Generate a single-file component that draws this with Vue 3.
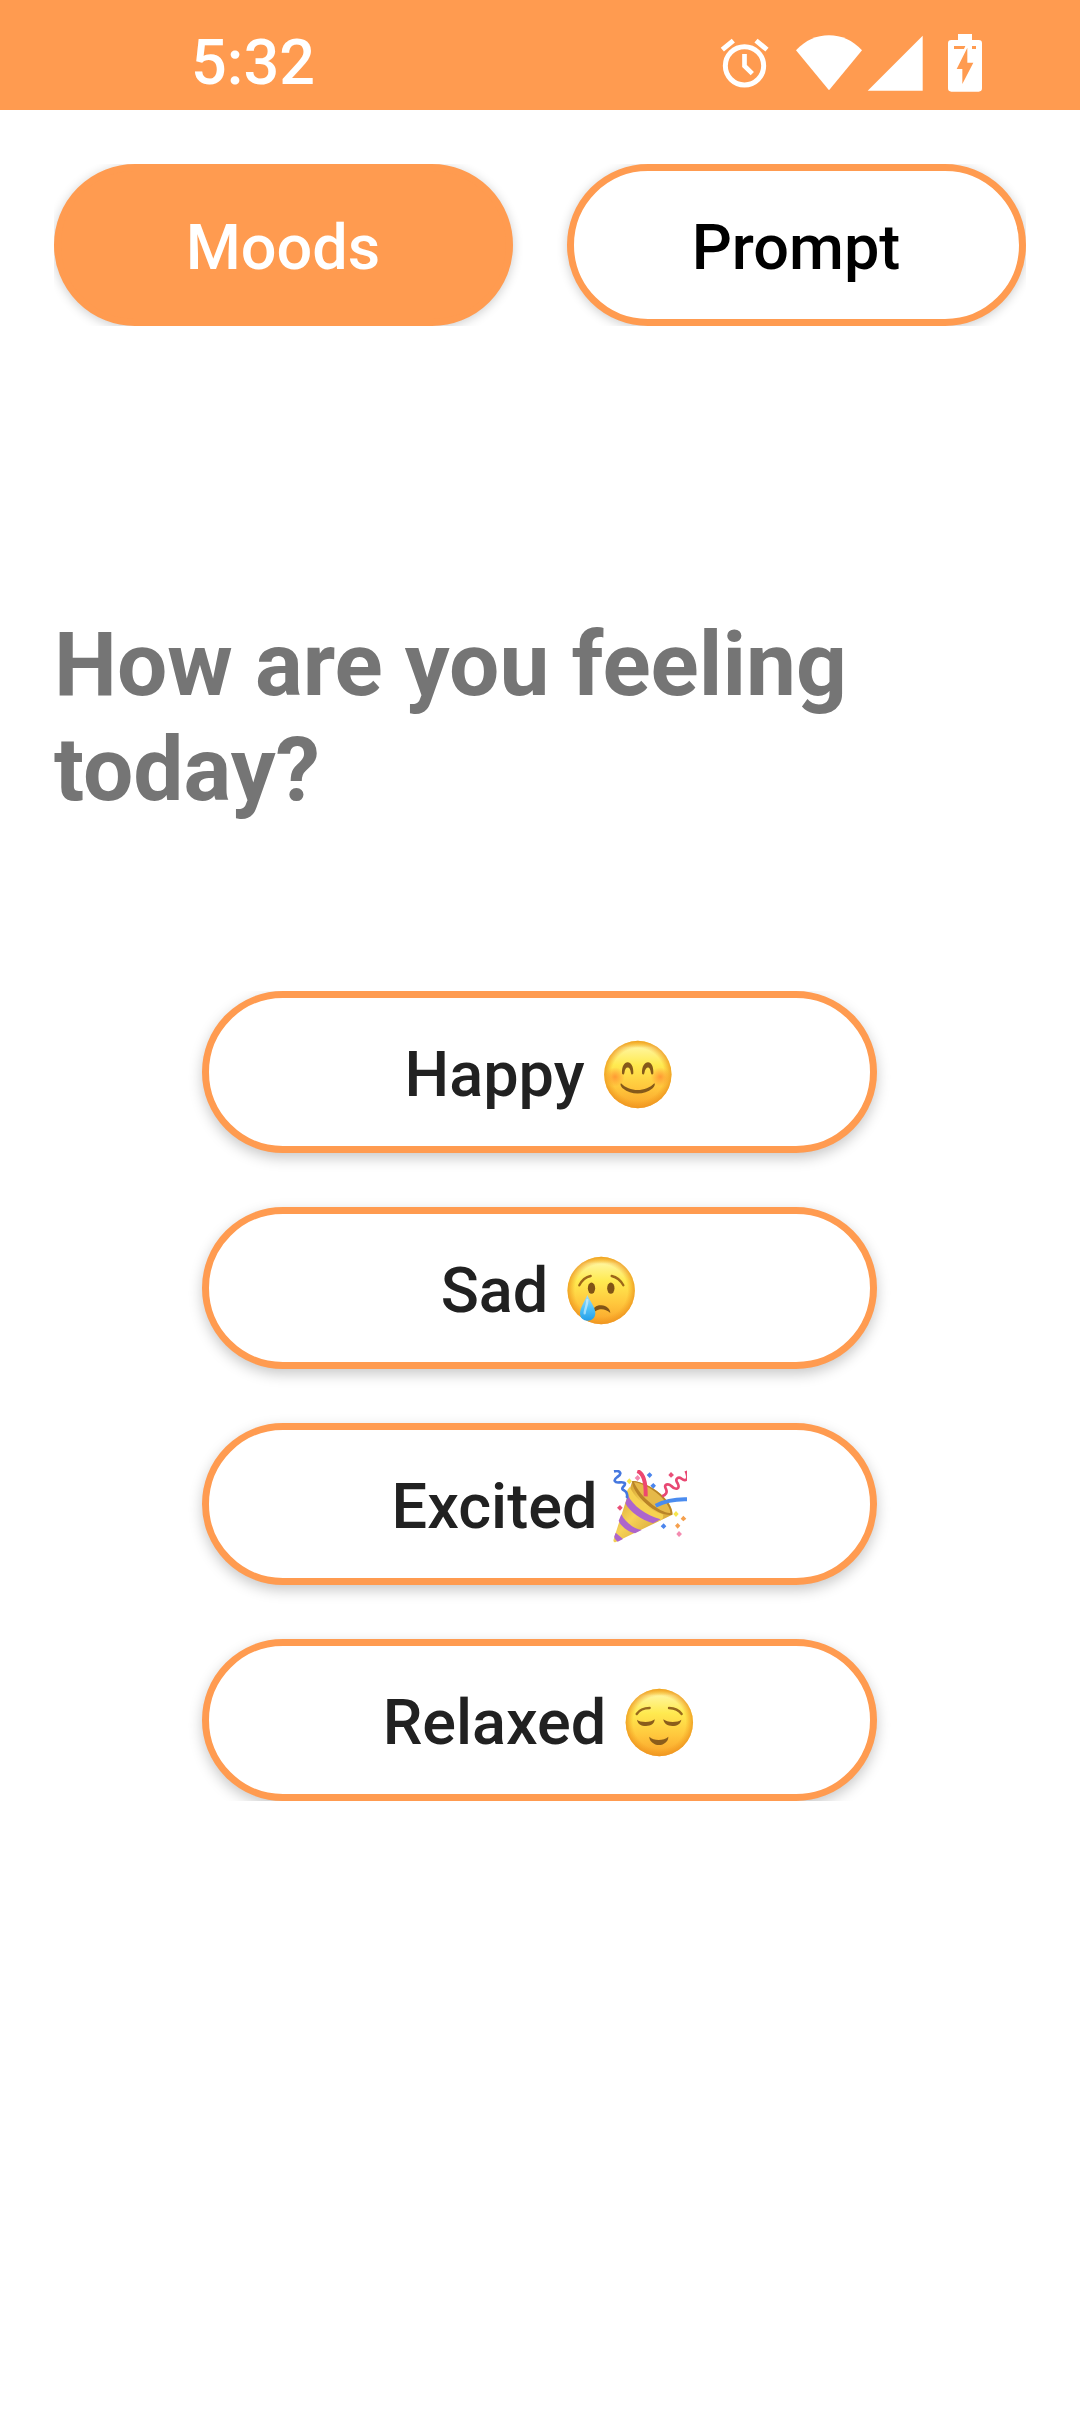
<script setup>
const tabs = [
  { label: 'Moods', active: true },
  { label: 'Prompt', active: false },
]

const moods = [
  { label: 'Happy', icon: 'happy', box: '33 23.500 222 222', cx: 143.5, cy: 133 },
  { label: 'Sad', icon: 'sad', box: '29 27 222 222', cx: 140.5, cy: 136.5 },
  { label: 'Excited', icon: 'party', box: '41 31 222 222' },
  { label: 'Relaxed', icon: 'relaxed', box: '38 18 222 222', cx: 150, cy: 127.5 },
]
</script>

<template>
  <div class="screen">
    <header class="status">
      <span class="time">5:32</span>
      <div class="icons">
        <svg class="alarm" viewBox="60 -30 147 330" width="49" height="110">
          <circle cx="133.5" cy="167.5" r="57.5" fill="none" stroke="#fff" stroke-width="15" />
          <path d="M133.500 132V168L157 191" fill="none" stroke="#fff" stroke-width="14" />
          <path d="M67 119L100 92M201 119L168 92" fill="none" stroke="#fff" stroke-width="15" />
        </svg>
        <svg class="wifi" viewBox="285 -30 204 330" width="68" height="110">
          <path d="M387 241L288 121C316 91 350 76 387 76S458 91 486 121Z" fill="#fff" />
        </svg>
        <svg class="signal" viewBox="501 -30 168 330" width="56" height="110">
          <path d="M503 242H668V77Z" fill="#fff" />
        </svg>
        <svg class="battery" viewBox="741 -30 108 330" width="36" height="110">
          <path
            fill="#fff"
            fill-rule="evenodd"
            d="M774 72H816V90H836Q846 90 846 100V235Q846 245 836 245H754Q744 245 744 235V100Q744 90 754 90H774ZM762 108V117H792L796 108ZM816 108V117H828V108ZM802 113L770 177H787V222L820 158H802Z"
          />
        </svg>
      </div>
    </header>

    <nav class="tabs">
      <button v-for="t in tabs" :key="t.label" class="pill tab" :class="{ active: t.active }">{{ t.label }}</button>
    </nav>

    <h1 class="question">How are you feeling today?</h1>

    <main class="moods">
      <button v-for="m in moods" :key="m.label" class="pill mood">
        <span>{{ m.label }}</span>
        <svg class="emoji" :viewBox="m.box" width="74" height="74">
          <defs>
            <linearGradient id="face" x1="0" y1="0" x2="0" y2="1">
              <stop offset="0" stop-color="#fdd22c" />
              <stop offset="0.1" stop-color="#fff59a" />
              <stop offset="0.36" stop-color="#ffea50" />
              <stop offset="0.7" stop-color="#ffc63c" />
              <stop offset="1" stop-color="#f9a22a" />
            </linearGradient>
            <radialGradient id="rim">
              <stop offset="0.78" stop-color="#f29a1c" stop-opacity="0" />
              <stop offset="1" stop-color="#ec9420" stop-opacity="0.8" />
            </radialGradient>
            <radialGradient id="blush">
              <stop offset="0" stop-color="#ff7a2a" stop-opacity="0.65" />
              <stop offset="1" stop-color="#ff7a2a" stop-opacity="0" />
            </radialGradient>
            <linearGradient id="tear" x1="0" y1="0" x2="0" y2="1">
              <stop offset="0" stop-color="#a5ddf7" />
              <stop offset="0.55" stop-color="#4dc0f7" />
              <stop offset="1" stop-color="#249ee8" />
            </linearGradient>
            <linearGradient id="cone" x1="0" y1="0.2" x2="0.8" y2="1">
              <stop offset="0" stop-color="#cf9a2c" />
              <stop offset="0.45" stop-color="#f7d358" />
              <stop offset="1" stop-color="#cc972d" />
            </linearGradient>
          </defs>

          <template v-if="m.icon !== 'party'">
            <circle :cx="m.cx" :cy="m.cy" r="101" fill="url(#face)" />
            <circle :cx="m.cx" :cy="m.cy" r="101" fill="url(#rim)" />
          </template>

          <g v-if="m.icon === 'happy'">
            <circle cx="75" cy="140" r="29" fill="url(#blush)" />
            <circle cx="211" cy="140" r="29" fill="url(#blush)" />
            <path
              fill="#85591a"
              d="M96 130C95 108 103 96 113 96S131 108 130 130C127 135 124 134 123 129C121 117 118 112 113 112S105 117 103 129C102 134 98 135 96 130ZM156 130C155 108 164 96 174 96S191 108 190 130C188 135 184 134 183 129C181 117 178 112 174 112S165 117 163 129C162 134 158 135 156 130Z"
            />
            <path d="M93 159C118 186 168 186 193 159C197 162 192 170 187 175C163 195 123 195 99 175C94 170 89 162 93 159Z" fill="#85591a" />
          </g>

          <g v-else-if="m.icon === 'sad'">
            <ellipse cx="111.500" cy="129.500" rx="11" ry="17" fill="#815416" />
            <ellipse cx="169.500" cy="129.500" rx="11" ry="17" fill="#815416" />
            <path d="M75 121Q87 97 109 93M172 93Q195 98 207 121" fill="none" stroke="#9d6719" stroke-width="7" stroke-linecap="round" />
            <path d="M113 203C115 188 127 180 141 181C157 182 167 192 168 204C157 194 146 191 137 193C127 195 120 202 113 203Z" fill="#815416" />
            <path d="M99 150C103 163 124 187 123 205C122 220 113 227 100 227S77 220 77 205C77 187 95 163 99 150Z" fill="url(#tear)" />
            <path d="M99 165C99 183 91 192 91 205" fill="none" stroke="#d8f3ff" stroke-width="7" stroke-linecap="round" opacity="0.6" />
          </g>

          <g v-else-if="m.icon === 'relaxed'">
            <path
              d="M82 102Q94 84 121 84M179 84Q205 85 217 102"
              fill="none"
              stroke="#98691d"
              stroke-width="7"
              stroke-linecap="round"
            />
            <path
              fill="#8b5d1b"
              d="M83 119C92 128 127 128 136 118C136 131 125 138 110 138S85 132 83 119ZM162 118C172 128 206 128 216 119C214 132 203 138 189 138S163 131 162 118ZM120 170C133 183 163 183 177 170C178 183 164 195 149 195S119 183 120 170Z"
            />
          </g>

          <g v-else>
            <path d="M99 64C118 63 159 80 184 103C206 122 222 147 219 165L48 248C43 248 41 244 43 239Z" fill="url(#cone)" />
            <path d="M99 64C117 63 158 80 184 103C207 124 221 150 219 165C204 170 169 158 141 133C115 111 96 78 99 64Z" fill="#b98427" />
            <path d="M104 68C121 69 155 84 180 107C202 127 214 149 213 160C184 162 123 113 104 68Z" fill="#e6b949" />
            <path d="M92 82C103 112 145 150 190 164C194 172 190 180 181 184C137 172 95 142 82 108C80 97 86 86 92 82Z" fill="#f6d150" />
            <path d="M86 107C99 136 139 168 184 179L161 191C127 182 91 156 78 131Z" fill="#ad65cc" />
            <path d="M66 164C78 188 103 207 127 211L107 221C85 216 64 199 58 183ZM49 219L71 238L55 246C47 241 44 234 45 230Z" fill="#ad65cc" />
            <path d="M114 34C134 41 140 68 139 110" fill="none" stroke="#ed4770" stroke-width="12" />
            <path d="M169 138C198 123 228 118 264 119" fill="none" stroke="#4b8cef" stroke-width="12" />
            <path d="M44 35C64 31 69 43 54 52C40 62 46 70 61 68C80 66 80 74 71 82C63 92 80 91 82 101C84 106 84 112 81 115" fill="none" stroke="#4678df" stroke-width="8" />
            <path d="M188 110C199 106 205 99 200 88C191 73 207 71 216 79C229 93 244 88 235 71C225 58 237 49 247 57C261 68 270 57 259 34" fill="none" stroke="#e84772" stroke-width="8" />
            <path d="M90 56l8 9-8 9-8-9ZM230 154l8 9-8 9-8-9Z" fill="#f7e64e" />
            <path d="M151 38l8 8-8 9-9-9ZM162 70l8 8-8 9-9-9ZM193 191l8 9-8 8-9-8Z" fill="#4b85ed" />
            <path d="M215 37l9 9-9 8-8-8ZM62 136l8 8-8 9-9-9Z" fill="#e95078" />
            <path d="M115 46l8 9-8 9-9-9ZM239 214l9 9-9 9-8-9Z" fill="#f48bb0" />
            <path d="M252 168l9 9-9 8-8-8ZM235 190l8 8-8 9-8-9Z" fill="#f5a04e" />
          </g>
        </svg>
      </button>
    </main>
  </div>
</template>

<style>
body {
  margin: 0;
  background: #fff;
}
</style>

<style scoped>
.screen {
  width: 1080px;
  height: 2412px;
  background: #fff;
  font-family: Roboto, sans-serif;
  overflow: hidden;
}

.status {
  display: flex;
  justify-content: space-between;
  height: 110px;
  box-sizing: border-box;
  padding: 0 97px 0 191px;
  background: #ff9b50;
}

.time {
  padding-top: 26px;
  color: #fff;
  font-size: 63px;
  font-weight: 500;
  line-height: 74px;
}

.icons {
  display: flex;
}

.icons svg {
  display: block;
}

.wifi {
  margin-left: 26px;
}

.signal {
  margin-left: 4px;
}

.battery {
  margin-left: 24px;
}

.tabs {
  display: flex;
  gap: 54px;
  margin: 54px 54px 0;
  overflow: hidden;
}

.pill {
  display: flex;
  align-items: center;
  justify-content: center;
  box-sizing: border-box;
  height: 162px;
  margin: 0;
  padding: 5px 0 0;
  border: 7px solid #ff9b50;
  border-radius: 81px;
  background: #fff;
  font-family: inherit;
  font-size: 63px;
  font-weight: 500;
  line-height: 74px;
  box-shadow: 0 5px 14px rgba(0, 0, 0, 0.22);
}

.tab {
  flex: 1;
  padding-right: 1px;
  color: #000;
  box-shadow: 0 2px 11px rgba(0, 0, 0, 0.2);
}

.tab.active {
  background: #ff9b50;
  color: #fff;
}

.question {
  margin: 286px 54px 0;
  color: #757575;
  font-size: 89.2px;
  font-weight: 700;
  line-height: 105px;
}

.moods {
  display: flex;
  flex-direction: column;
  align-items: center;
  gap: 54px;
  margin-top: 169px;
  padding-right: 1px;
  overflow: hidden;
}

.mood {
  width: 675px;
  gap: 16px;
  color: #212121;
}

.emoji {
  display: block;
  flex: none;
}
</style>
